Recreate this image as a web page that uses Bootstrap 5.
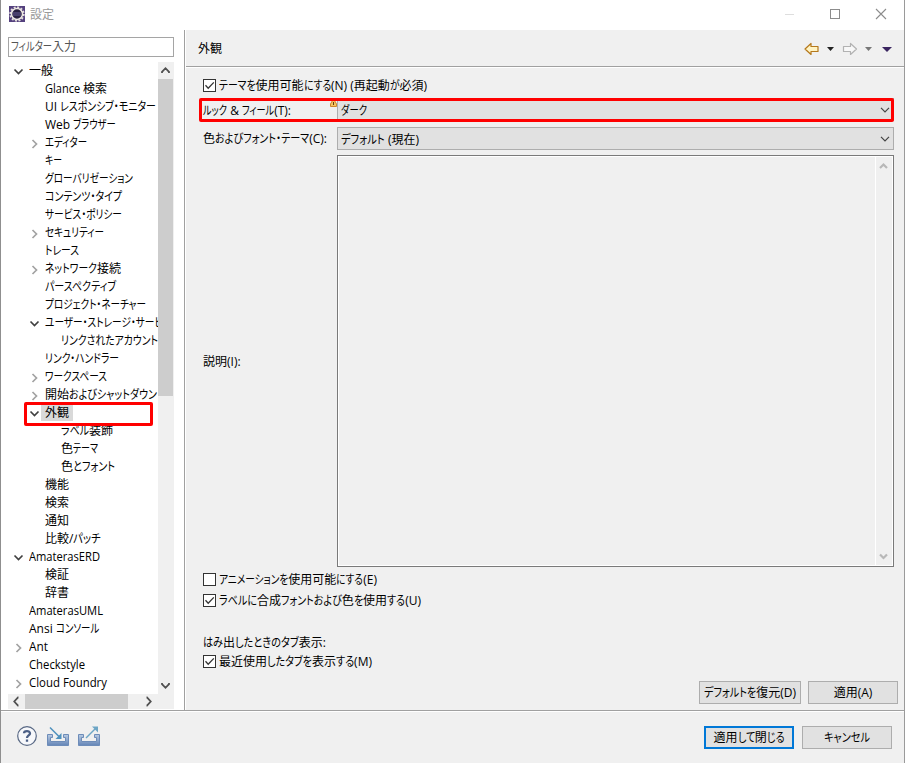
<!DOCTYPE html>
<html lang="ja">
<head>
<meta charset="utf-8">
<title>設定</title>
<link href="https://cdn.jsdelivr.net/npm/bootstrap@5.3.0/dist/css/bootstrap.min.css" rel="stylesheet">
<style>
body{font:12px/18px "Open Sans","Noto Sans CJK JP",sans-serif;color:#000;background:#f0f0f0;overflow:hidden}
.win{width:905px;height:763px;border-left:1px solid #8f8f8f;border-right:1px solid #9a9a9a}
.fit{white-space:pre;display:inline-block;font-feature-settings:"palt"}
.run{display:inline-block;transform-origin:0 50%;white-space:pre}
.titlebar{height:30px;background:#fff;color:#999}
.app-icon{margin:-2px 5px 0 8px}
.caption-btns{margin:-2px 16px 0 0}
.side{width:184px;background:#fff;border-right:1px solid #a0a0a0;padding:7px 10px 0 7px}
.filter{height:20px;border:1px solid #a5a5a5;background:#fff;color:#555;padding-left:2px;line-height:17px}
.tree-grid{display:grid;grid-template-columns:150px 16px;grid-template-rows:632px 15px;margin-top:5px}
.tree{overflow:hidden;background:#fff}
.item{height:18px;white-space:nowrap;line-height:18px}
.lv0{padding-left:5px}.lv1{padding-left:21px}.lv2{padding-left:37px}
.tw{width:11px;height:18px;margin-right:5px;flex:none}
.tw svg,.sb svg,.drop svg{display:block}
.sel{background:#d9d9d9;box-shadow:-4px 0 #d9d9d9,4px 0 #d9d9d9;height:17px}
.sb{background:#f0f0f0}
.thumb{background:#cdcdcd}
.mark-red{position:absolute;border:3px solid #f00;border-radius:2px;pointer-events:none}
.mark-tree{left:23px;top:402px;width:129px;height:24px}
.mark-form{left:198px;top:98px;width:695px;height:24px}
.main-pane{border-left:1px solid #fff;background:#f0f0f0}
.head{height:37px;border-bottom:1px solid #a0a0a0;box-shadow:0 1px #fff;padding:1px 8px 0 12px}
.form{padding:11px 10px 0 17px}
.cb{width:13px;height:13px;border:1px solid #333;background:#fff;margin-right:3px;flex:none}
.cb svg{display:block}
.line{height:14px}
.line .fit{padding-top:1px}
.lab{width:134px;flex:none}
.drop{height:23px;border:1px solid #adadad;background:#e1e1e1;padding:0 3px 0 3px;line-height:20px}
.drop .fit{padding-top:2px}
.memo{height:412px;border:1px solid #7a7a7a;box-shadow:inset 1px 1px #fff,inset -1px -1px #fff;padding:1px}
.memo-sb{border-left:1px solid #fff;width:17px;padding:0}
.push{height:23px;width:90px;border:1px solid #adadad;background:#e1e1e1;border-radius:0;padding:1px 0 0;font-size:12px;line-height:20px;color:#000}
.push-wide{width:102px}
.push-main{border:2px solid #0078d7;line-height:18px}
.foot{height:53px;border-top:1px solid #a0a0a0;box-shadow:inset 0 1px #fff;padding:0 12px 0 15px}
</style>
<script src="https://cdn.jsdelivr.net/npm/bootstrap@5.3.0/dist/js/bootstrap.bundle.min.js"></script>
</head>
<body>
<svg width="0" height="0" class="position-absolute">
<defs>
<symbol id="open" viewBox="0 0 11 18"><path d="M1.500 7.500 5.500 11.500 9.500 7.500" fill="none" stroke="#404040" stroke-width="1.700"/></symbol>
<symbol id="shut" viewBox="0 0 11 18"><path d="M3.500 6 7.500 10 3.500 14" fill="none" stroke="#a2a2a2" stroke-width="1.700"/></symbol>
<symbol id="up" viewBox="0 0 16 17"><path d="M4 11V9.900L7.500 6.200l3.500 3.700V11" fill="none" stroke="#505050" stroke-width="1.800"/></symbol>
<symbol id="down" viewBox="0 0 16 17"><path d="M4 6v1.100L7.500 10.800l3.500-3.700V6" fill="none" stroke="#505050" stroke-width="1.800"/></symbol>
<symbol id="chev" viewBox="0 0 10 6"><path d="M1 .8 5 4.800 9 .8" fill="none" stroke="#444" stroke-width="1.200"/></symbol>
<symbol id="tick" viewBox="0 0 11 11"><path d="M1.500 5.300 4.200 8.200 9.800 2.400" fill="none" stroke="#333" stroke-width="1.300"/></symbol>
<linearGradient id="tray" x2="0" y2="1"><stop stop-color="#b9cbe2"/><stop offset="1" stop-color="#6485b7"/></linearGradient>
</defs>
</svg>
<div class="win d-flex flex-column position-relative">
  <div class="titlebar d-flex align-items-center">
    <svg class="app-icon" width="16" height="16" viewBox="0 0 16 16"><rect width="16" height="16" fill="#54417e"/><circle cx="8" cy="8" r="6.800" fill="none" stroke="#e6e2de" stroke-width="1.800" stroke-dasharray="2 1.560"/><circle cx="8" cy="8" r="5.500" fill="#28203f" stroke="#eee9e4" stroke-width="1.500"/><path d="M4 7h8M4 9h8" stroke="#6b6199" stroke-width="1"/></svg>
    <span class="fit" data-w="24">設定</span>
    <svg class="ms-auto caption-btns" width="104" height="14" viewBox="0 0 104 14" fill="none"><path d="M1 7.500h9" stroke="#dedede"/><rect x="46.500" y="2.500" width="9" height="9" stroke="#8c8c8c"/><path d="m92 2 10 10m0-10-10 10" stroke="#8c8c8c" stroke-width="1.100"/></svg>
  </div>
  <div class="d-flex flex-grow-1">
    <div class="side">
      <div class="filter"><span class="fit" data-w="65">フィルター入力</span></div>
      <div class="tree-grid">
        <div class="tree" id="tree"></div>
        <div class="sb d-flex flex-column"><svg width="16" height="17"><use href="#up"/></svg><div class="thumb" style="height:317px;width:15px"></div><svg class="mt-auto" width="16" height="17"><use href="#down"/></svg></div>
        <div class="sb d-flex"><svg width="17" height="15" viewBox="0 0 17 15"><path d="M10.500 3.500H10L6.300 7.500 10 11.500h.5" fill="none" stroke="#505050" stroke-width="1.800"/></svg><div class="thumb" style="width:103px"></div><svg class="ms-auto" width="17" height="15" viewBox="0 0 17 15"><path d="M5.500 3.500h.5l3.700 4-3.700 4h-.5" fill="none" stroke="#505050" stroke-width="1.800"/></svg></div>
        <div class="sb"></div>
      </div>
    </div>
    <div class="main-pane flex-grow-1">
      <div class="head d-flex align-items-center">
        <span class="fit" data-w="24">外観</span>
        <svg class="ms-auto" width="92" height="14" viewBox="0 0 92 14"><path d="M1 7 7 1.500V4.500h7v5H7v3z" fill="#fff3c2" stroke="#b5781c" stroke-width="1.200" stroke-linejoin="round"/><path d="M23 5h7l-3.500 4z" fill="#222"/><path d="M52.500 7l-6-5.500V4.500h-7v5h7v3z" fill="#f8f8f8" stroke="#b2b2b2" stroke-width="1.200" stroke-linejoin="round"/><path d="M61 5h7l-3.500 4z" fill="#777"/><path d="M78 5h10l-5 5z" fill="#3a2560"/></svg>
      </div>
      <div class="form d-flex flex-column">
        <div class="line d-flex align-items-center"><span class="cb"><svg width="11" height="11"><use href="#tick"/></svg></span><span class="fit" data-w="208">テーマを使用可能にする(N) (再起動が必須)</span></div>
        <div class="d-flex align-items-center" style="margin-top:6px"><div class="lab d-flex justify-content-between"><span class="fit" data-w="88" style="padding-top:2px">ルック &amp; フィール(T):</span><svg width="7" height="7" viewBox="0 0 7 7"><path d="M2.500.5h2L6.500 4v2.500h-6V4z" fill="#f5c35e" stroke="#cf852b"/><path d="M3.500 2v3" stroke="#663b12"/></svg></div><div class="drop flex-grow-1 d-flex align-items-center justify-content-between"><span class="fit" data-w="26">ダーク</span><svg width="10" height="6"><use href="#chev"/></svg></div></div>
        <div class="d-flex align-items-center" style="margin-top:6px"><div class="lab"><span class="fit" data-w="124" style="padding-top:1px">色およびフォント・テーマ(C):</span></div><div class="drop flex-grow-1 d-flex align-items-center justify-content-between"><span class="fit" data-w="78">デフォルト (現在)</span><svg width="10" height="6"><use href="#chev"/></svg></div></div>
        <div class="d-flex align-items-center" style="margin-top:5px"><div class="lab"><span class="fit" style="padding-top:1px">説明(I):</span></div><div class="memo flex-grow-1 d-flex justify-content-end"><div class="memo-sb d-flex flex-column justify-content-between"><svg width="16" height="17" viewBox="0 0 16 17"><path d="M4 11 7.500 7.500 11 11" fill="none" stroke="#b8b8b8" stroke-width="2.200"/></svg><svg width="16" height="17" viewBox="0 0 16 17"><path d="M4 6.500 7.500 10 11 6.500" fill="none" stroke="#b8b8b8" stroke-width="2.200"/></svg></div></div></div>
        <div class="line d-flex align-items-center" style="margin-top:5px"><span class="cb"></span><span class="fit" data-w="158">アニメーションを使用可能にする(E)</span></div>
        <div class="line d-flex align-items-center" style="margin-top:7px"><span class="cb"><svg width="11" height="11"><use href="#tick"/></svg></span><span class="fit" data-w="202">ラベルに合成フォントおよび色を使用する(U)</span></div>
        <div class="line d-flex align-items-center" style="margin-top:28px"><span class="fit" data-w="123">はみ出したときのタブ表示:</span></div>
        <div class="line d-flex align-items-center" style="margin-top:5px"><span class="cb"><svg width="11" height="11"><use href="#tick"/></svg></span><span class="fit" data-w="153">最近使用したタブを表示する(M)</span></div>
      </div>
      <div class="d-flex justify-content-end" style="gap:7px;padding:13px 6px 0 0"><button class="btn push push-wide"><span class="fit" data-w="92">デフォルトを復元(D)</span></button><button class="btn push"><span class="fit">適用(A)</span></button></div>
    </div>
  </div>
  <div class="foot d-flex align-items-center">
    <svg width="86" height="24" viewBox="0 0 86 24">
      <circle cx="11" cy="11" r="9.300" fill="#f7f8fb" stroke="#596985" stroke-width="1.200"/>
      <path d="M8 8.300C8 5.300 14 5.200 14 8.400c0 2-3 2.200-3 4.600M11 14.500v2.200" fill="none" stroke="#4b5f86" stroke-width="2.300"/>
      <path d="M31.500 9.500h5v3h-2v4h15v-4h-2v-3h5v11h-21z" fill="url(#tray)" stroke="#6d8cb9"/>
      <path d="M34 2.500 43.500 12" stroke="#4f91bd" stroke-width="1.500"/><path d="M45.500 14h-6l6-6z" fill="#4f91bd"/>
      <path d="M62.500 9.500h5v3h-2v4h15v-4h-2v-3h5v11h-21z" fill="url(#tray)" stroke="#6d8cb9"/>
      <path d="M70 13 80 3" stroke="#6da5c5" stroke-width="1.500"/><path d="M76 1.500h6v6z" fill="#6da5c5"/>
    </svg>
    <div class="ms-auto d-flex" style="gap:8px"><button class="btn push push-main"><span class="fit" data-w="71">適用して閉じる</span></button><button class="btn push"><span class="fit" data-w="46">キャンセル</span></button></div>
  </div>
  <div class="mark-red mark-tree"></div>
  <div class="mark-red mark-form"></div>
</div>
<script>
// [level, state (o = open, c = closed, - = leaf), label, label width]
const rows=[[0,'o','一般',24],[1,'-','Glance 検索',62],[1,'-','UI レスポンシブ・モニター',111],[1,'-','Web ブラウザー',71],[1,'c','エディター',42],[1,'-','キー',17],[1,'-','グローバリゼーション',88],[1,'-','コンテンツ・タイプ',77],[1,'-','サービス・ポリシー',77],[1,'c','セキュリティー',59],[1,'-','トレース',34],[1,'c','ネットワーク接続',76],[1,'-','パースペクティブ',71],[1,'-','プロジェクト・ネーチャー',101],[1,'o','ユーザー・ストレージ・サービス',127],[2,'-','リンクされたアカウント',97],[1,'-','リンク・ハンドラー',74],[1,'c','ワークスペース',62],[1,'c','開始およびシャットダウン',112],[1,'o','外観',24],[2,'-','ラベル装飾',52],[2,'-','色テーマ',37],[2,'-','色とフォント',54],[1,'-','機能',24],[1,'-','検索',24],[1,'-','通知',24],[1,'-','比較/パッチ',56],[0,'o','AmaterasERD',71],[1,'-','検証',24],[1,'-','辞書',24],[0,'-','AmaterasUML',74],[0,'-','Ansi コンソール',70],[0,'c','Ant',19],[0,'-','Checkstyle',56],[0,'c','Cloud Foundry',78]];
document.getElementById('tree').innerHTML=rows.map(([l,s,t,w])=>{
  const icon=s==='-'?'':`<svg width="11" height="18"><use href="#${s==='o'?'open':'shut'}"/></svg>`;
  return `<div class="item d-flex lv${l}"><span class="tw">${icon}</span><span class="fit${t==='外観'?' sel':''}" data-w="${w}">${t}</span></div>`;
}).join('');
// Condense the kana (or the Latin text where there is no kana) so that each label has its UI-font width
document.fonts.ready.then(()=>document.querySelectorAll('.fit[data-w]').forEach(el=>{
  const text=el.textContent,kana=/[\u3040-\u30ff]/.test(text);
  const re=kana?/([\u3040-\u30ff]+)/:/([\x20-\x7e]+)/;
  if(!re.test(text))return;
  el.innerHTML=text.split(re).map((p,i)=>i%2?`<span class="run">${p}</span>`:p.replace('&','&amp;')).join('');
  const runs=[...el.querySelectorAll('.run')],ws=runs.map(r=>r.getBoundingClientRect().width);
  const k=ws.reduce((a,b)=>a+b,0),f=(+el.dataset.w-(el.getBoundingClientRect().width-k))/k;
  runs.forEach((r,i)=>{r.style.width=ws[i]*f+'px';r.style.transform=`scaleX(${f})`});
}));
</script>
</body>
</html>
